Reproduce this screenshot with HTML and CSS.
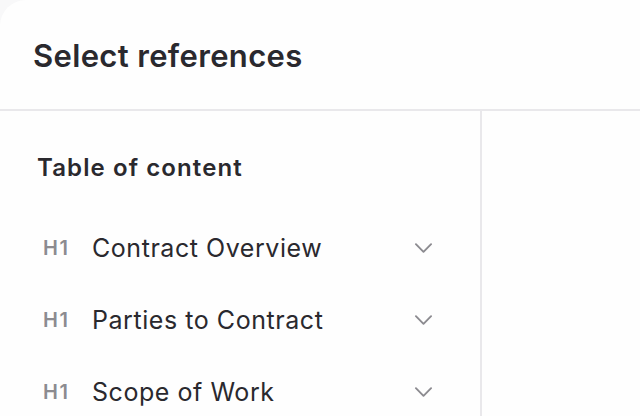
FILE: index.html
```html
<!DOCTYPE html>
<html>
<head>
<meta charset="utf-8">
<link rel="stylesheet" href="styles.css">
</head>
<body>
<div class="modal">
  <header class="header">
    <h1 class="title">Select references</h1>
  </header>
  <div class="body">
    <aside class="sidebar">
      <h2 class="toc-title">Table of content</h2>
      <ul class="toc">
        <li class="row">
          <span class="tag">H1</span>
          <span class="label">Contract Overview</span>
          <svg class="chev" viewBox="0 0 20 12" width="20" height="12"><path d="M2 2 L10 10 L18 2" fill="none" stroke="#8c8b90" stroke-width="2" stroke-linecap="round" stroke-linejoin="round"/></svg>
        </li>
        <li class="row">
          <span class="tag">H1</span>
          <span class="label">Parties to Contract</span>
          <svg class="chev" viewBox="0 0 20 12" width="20" height="12"><path d="M2 2 L10 10 L18 2" fill="none" stroke="#8c8b90" stroke-width="2" stroke-linecap="round" stroke-linejoin="round"/></svg>
        </li>
        <li class="row">
          <span class="tag">H1</span>
          <span class="label">Scope of Work</span>
          <svg class="chev" viewBox="0 0 20 12" width="20" height="12"><path d="M2 2 L10 10 L18 2" fill="none" stroke="#8c8b90" stroke-width="2" stroke-linecap="round" stroke-linejoin="round"/></svg>
        </li>
      </ul>
    </aside>
    <main class="content"></main>
  </div>
</div>
</body>
</html>
```
FILE: styles.css
```css
* { box-sizing: border-box; }
html, body { margin: 0; padding: 0; height: 100%; background: #f8f8f9; }
body { font-family: Inter, "Noto Sans", sans-serif; color: #2a292e; overflow: hidden; }
.modal {
  height: 100%;
  background: #fefefe;
  border-top-left-radius: 26px;
  display: flex;
  flex-direction: column;
}
.header {
  height: 111px;
  flex: none;
  display: flex;
  align-items: center;
  padding-left: 33px;
  border-bottom: 2px solid #e9e8eb;
}
.title {
  margin: 0;
  font-size: 31px;
  font-weight: 600;
  letter-spacing: 0.35px;
  line-height: 36px;
  padding-top: 2px;
}
.body { flex: 1; display: flex; }
.sidebar {
  width: 482px;
  flex: none;
  border-right: 2px solid #e9e8eb;
  padding: 43px 0 0 37px;
}
.toc-title {
  margin: 0;
  font-size: 24px;
  font-weight: 600;
  letter-spacing: 1.1px;
  line-height: 28px;
}
.toc { list-style: none; margin: 30px 0 0; padding: 0; }
.row {
  height: 72px;
  display: flex;
  align-items: center;
  padding-left: 6px;
  padding-right: 47px;
}
.tag {
  width: 49px;
  font-size: 20px;
  font-weight: 600;
  letter-spacing: 1.6px;
  color: #8c8b90;
}
.label {
  flex: 1;
  font-size: 25px;
  font-weight: 400;
  letter-spacing: 0.55px;
  color: #2a292e;
}
.chev { flex: none; width: 19px; }
.content { flex: 1; }
```
